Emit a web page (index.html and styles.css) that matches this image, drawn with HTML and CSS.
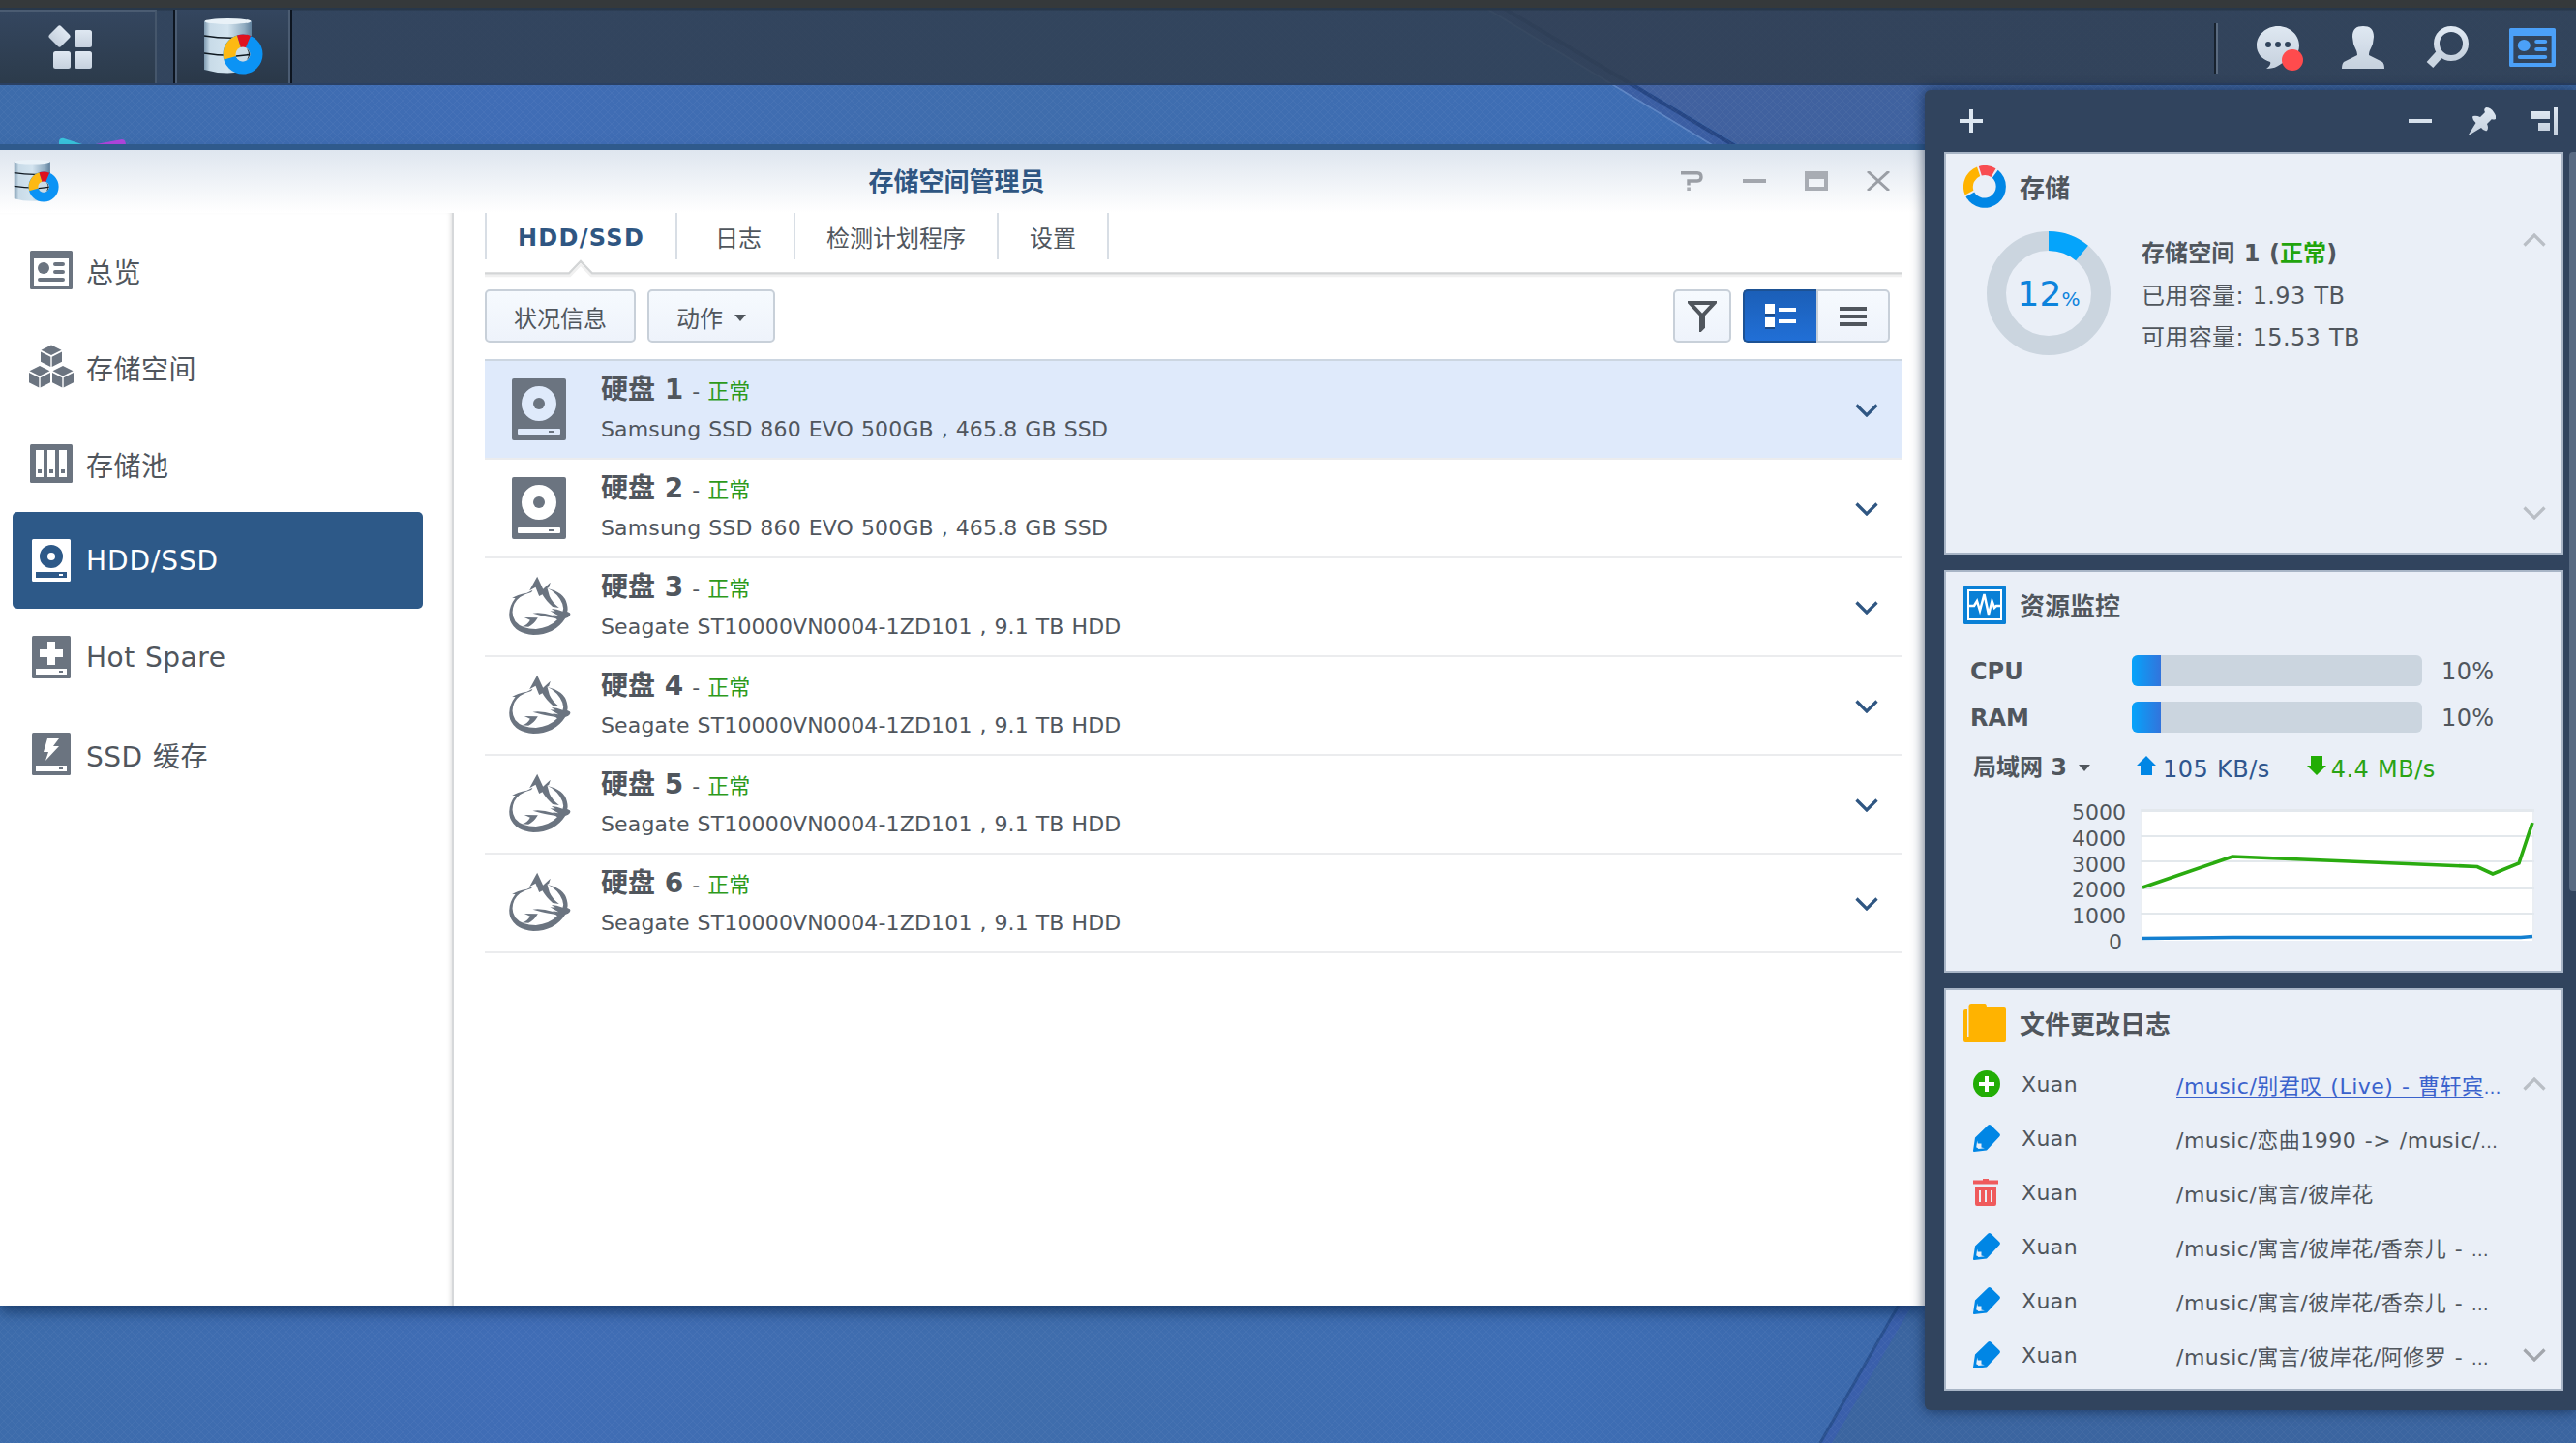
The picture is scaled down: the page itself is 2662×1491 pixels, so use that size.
FILE: index.html
```html
<!DOCTYPE html>
<html lang="zh-CN">
<head>
<meta charset="utf-8">
<title>存储空间管理员</title>
<link rel="stylesheet" href="styles.css">
</head>
<body>
<svg width="0" height="0" class="defs" aria-hidden="true">
  <defs>
    <linearGradient id="g-light" x1="0" y1="0" x2="0" y2="1"><stop offset="0" stop-color="#dfe8f2"/><stop offset="1" stop-color="#c6d1de"/></linearGradient>
    <linearGradient id="g-metal" x1="0" y1="0" x2="1" y2="0"><stop offset="0" stop-color="#7e9ab0"/><stop offset=".12" stop-color="#c8dbe8"/><stop offset=".5" stop-color="#d3e4ef"/><stop offset=".85" stop-color="#8fabc0"/><stop offset="1" stop-color="#5f7f9b"/></linearGradient>
    <symbol id="i-storage" viewBox="0 0 62 58">
      <path d="M1 3Q25-1 50 3V53Q25 60 1 53Z" fill="url(#g-metal)"/>
      <ellipse cx="25.500" cy="3" rx="24" ry="3" fill="#e9f2f8"/>
      <path d="M1 18Q25 22 50 19M1 36Q25 40 50 37" stroke="#0f1820" stroke-width="1.600" fill="none"/>
      <circle cx="41" cy="37" r="14" fill="none" stroke="#0b93f5" stroke-width="13"/>
      <path d="M41 37L21.400 42.600A20.500 20.500 0 0 1 35 17.400Z" fill="#fdb913"/>
      <path d="M41 37L35 17.400A20.500 20.500 0 0 1 49 18Z" fill="#e0121f"/>
      <circle cx="41" cy="37" r="7.500" fill="#c9dbe8"/>
      <path d="M34 39L48 37.500" stroke="#0f1820" stroke-width="1.600"/>
      <path d="M45 31A7.500 7.500 0 0 1 45 43Q49 37 45 31Z" fill="#101820"/>
    </symbol>
    <symbol id="i-overview" viewBox="0 0 44 40">
      <path fill-rule="evenodd" d="M1.500 0H42.500Q44 0 44 1.500V38.500Q44 40 42.500 40H1.500Q0 40 0 38.500V1.500Q0 0 1.500 0ZM4 8V36H40V8Z"/>
      <circle cx="14" cy="18" r="6"/><path d="M26 14H34M26 22H34M10 30H34" stroke="currentColor" stroke-width="4" stroke-linecap="round"/>
    </symbol>
    <symbol id="i-cube" viewBox="0 0 22 22"><path d="M11 0L21.500 5.200L11 10.600L.500 5.200ZM0 7L10.300 12.300V22.500L0 17.200ZM22 7L11.700 12.300V22.500L22 17.200Z"/></symbol>
    <symbol id="i-disk" viewBox="0 0 40 44">
      <path fill-rule="evenodd" d="M1.500 0H38.500Q40 0 40 1.500V42.500Q40 44 38.500 44H1.500Q0 44 0 42.500V1.500Q0 0 1.500 0ZM20 6A12 12 0 1 0 20 30A12 12 0 1 0 20 6ZM4 34V40H36V34Z"/>
      <circle cx="20" cy="18" r="4"/><path d="M28 36H32V38H28Z"/>
    </symbol>
    <symbol id="i-drive" viewBox="0 0 56 64">
      <path fill-rule="evenodd" d="M2 0H54Q56 0 56 2V62Q56 64 54 64H2Q0 64 0 62V2Q0 0 2 0ZM28 8A18 18 0 1 0 28 44A18 18 0 1 0 28 8ZM7 52Q6 52 6 53V57Q6 58 7 58H49Q50 58 50 57V53Q50 52 49 52Z"/>
      <circle cx="28" cy="26" r="6"/><path d="M38 54H44V56H38Z"/>
    </symbol>
    <symbol id="i-wolf" viewBox="28 19 194 186">
      <path d="M40 88Q55 78 86 72L104 63L100 70Q60 80 47 106Q34 135 50 160Q70 184 114 184Q156 180 180 155L166 140L184 143L158 128L174 129L162 121Q178 122 197 129L199 120Q196 90 163 65L150 58Q202 70 210 106Q214 122 211 130L219 134Q224 141 214 147L205 151Q172 202 106 202Q50 198 34 158Q24 122 50 88Z"/>
      <path d="M94 65L118 21L136 60L159 39L154 55L149 57L156 82Q166 104 186 118L166 115Q144 96 134 77L124 82L113 54Z"/>
      <path d="M104 135Q132 131 167 142L184 153Q150 147 132 143Z"/>
      <path d="M78 148L120 149Q106 172 91 177L70 176Q88 171 96 156Z"/>
    </symbol>
    <symbol id="i-pencil" viewBox="0 0 28 28"><path fill-rule="evenodd" d="M15.500 .500Q17 -.500 18.500 .800L27.200 9.300Q28.600 10.800 27.300 12.300L14 26.500L1 28Q-.300 28 0 26.800L2 13.500ZM4.200 16.500L3.200 23.500Q4.500 23.200 5.500 25L12 24.200L8.500 23.500V19.500H4.800Z"/></symbol>
    <symbol id="i-down" viewBox="0 0 24 14"><path d="M1.500 1.500L12 12L22.500 1.500" fill="none" stroke="currentColor" stroke-width="3.200"/></symbol>
    <symbol id="i-ring" viewBox="0 0 44 44">
      <path d="M35.700 4.700A22 22 0 1 1 2.500 32.200L11.200 27.500A12 12 0 1 0 29.800 12.800Z" fill="#0086e5"/>
      <path d="M1.600 30.500A22 22 0 0 1 14 1.500L17.200 11A12 12 0 0 0 10.400 25.800Z" fill="#ffb300"/>
      <path d="M15.800 .900A22 22 0 0 1 33.500 3.200L28.500 11.900A12 12 0 0 0 18.800 10.500Z" fill="#f84d52"/>
    </symbol>
  </defs>
</svg>
<div class="desktop">
  <svg class="wallpaper" viewBox="0 0 2662 1491">
    <defs>
      <linearGradient id="w1" x1="0" y1="0" x2="1" y2="0"><stop offset="0" stop-color="#3d6cab"/><stop offset=".2" stop-color="#406db6"/><stop offset=".4" stop-color="#3f6dac"/><stop offset=".6" stop-color="#3e6eb5"/><stop offset=".75" stop-color="#3b68aa"/><stop offset="1" stop-color="#3e64a5"/></linearGradient>
      <linearGradient id="w2" x1="0" y1="0" x2="1" y2="0"><stop offset="0" stop-color="#42609f"/><stop offset="1" stop-color="#3c66a0"/></linearGradient>
      <pattern id="weave" width="8" height="8" patternUnits="userSpaceOnUse"><path d="M0 0L8 8M8 0L0 8" stroke="#fff" stroke-opacity=".035" stroke-width="1"/></pattern>
    </defs>
    <rect width="2662" height="1491" fill="url(#w1)"/>
    <path d="M1555 8L1805 155H2662V8Z" fill="url(#w2)"/>
    <path d="M1535 8L1778 155H1802L1555 8Z" fill="#3b5ea3"/>
    <path d="M1535 8L1778 155" stroke="#5d85c4" stroke-width="1.500"/><path d="M1553 8L1800 155" stroke="#264684" stroke-width="4"/>
    <path d="M1964 1345L1881 1491H2662V1345Z" fill="#3b65a0"/>
    <path d="M1964 1345L1881 1491H1893L1978 1345Z" fill="#3a5fab"/><path d="M1964 1345L1881 1491" stroke="#29508f" stroke-width="3"/>
    <rect width="2662" height="1491" fill="url(#weave)"/>
    <path d="M61 146Q62 142 66 143L88 150H61Z" fill="#39c3dc"/><path d="M99 149L126 144Q130 144 130 150H96Z" fill="#b045dc"/>
  </svg>

  <header class="taskbar">
    <div class="main-menu"><svg width="46" height="46" viewBox="0 0 46 46" fill="url(#g-light)"><rect x="3" y="3" width="17" height="17" rx="2.500" transform="rotate(45 11.500 11.500)"/><rect x="27" y="5" width="18" height="18" rx="2.500"/><rect x="5" y="27" width="18" height="18" rx="2.500"/><rect x="27" y="27" width="18" height="18" rx="2.500"/></svg></div>
    <div class="task"><svg width="62" height="58"><use href="#i-storage"/></svg></div>
    <div class="tray">
      <svg class="chat" width="50" height="48" viewBox="0 0 50 48"><path d="M22 0C34 0 44 9 44 20C44 30 37 36 27 38C23 40 20 44 10 44C13 42 15 39 14 37C5 34 0 28 0 20C0 9 10 0 22 0Z" fill="url(#g-light)"/><g fill="#31445c"><circle cx="12" cy="19" r="3"/><circle cx="22" cy="19" r="3"/><circle cx="32" cy="19" r="3"/></g><circle cx="37" cy="35" r="11" fill="#ff4b4d"/></svg>
      <svg class="user" width="44" height="44" viewBox="0 0 44 44" fill="url(#g-light)"><path d="M22 0C29 0 33 3 33 11L32 18C31 22 28 25 28 30Q36 34 42 37Q44 39 44 44H0Q0 39 2 37Q8 34 16 30C16 25 13 22 12 18L11 11C11 3 15 0 22 0Z"/></svg>
      <svg class="find" width="44" height="44" viewBox="0 0 44 44"><circle cx="26" cy="18" r="15" fill="none" stroke="url(#g-light)" stroke-width="6"/><path d="M14 29L4 40" stroke="#cbd6e2" stroke-width="9"/></svg>
      <svg class="widget-btn" width="48" height="40" viewBox="0 0 44 40" preserveAspectRatio="none"><use href="#i-overview"/></svg>
    </div>
  </header>

  <section class="window">
    <header class="titlebar">
      <svg width="47" height="44"><use href="#i-storage"/></svg>
      <h1>存储空间管理员</h1>
      <div class="controls">
        <svg width="24" height="20" viewBox="0 0 24 20"><path d="M0 1.700H17Q21 1.700 21 6Q21 10 17 10H8V14.500" fill="none" stroke="#9a9ea5" stroke-width="3.400"/><rect x="6.300" y="16.500" width="3.600" height="3.500" fill="#a8acb2"/></svg>
        <svg width="24" height="20" viewBox="0 0 24 20"><path d="M0 10H24" stroke="#a2a6ad" stroke-width="4"/></svg>
        <svg width="24" height="20" viewBox="0 0 24 20"><path fill-rule="evenodd" d="M0 0H24V20H0ZM4 8V16H20V8Z" fill="#a8acb3"/></svg>
        <svg width="24" height="20" viewBox="0 0 24 20"><path d="M1 0L23 20M23 0L1 20" stroke="#9a9ea5" stroke-width="3"/></svg>
      </div>
    </header>
    <div class="body">
      <nav class="side">
        <a><svg width="44" height="40"><use href="#i-overview"/></svg><span>总览</span></a>
        <a><svg width="46" height="46" viewBox="0 0 46 46"><use href="#i-cube" x="12" y="0" width="22" height="23"/><use href="#i-cube" x="0" y="21" width="22" height="24"/><use href="#i-cube" x="24" y="21" width="22" height="24"/></svg><span>存储空间</span></a>
        <a><svg width="44" height="40" viewBox="0 0 44 40"><rect width="44" height="40" rx="1.500"/><path fill="#fff" fill-rule="evenodd" d="M6 6H14V34H6ZM18 6H26V34H18ZM30 6H38V34H30ZM8 26H12V30H8ZM20 26H24V30H20ZM32 26H36V30H32Z"/></svg><span>存储池</span></a>
        <a class="on"><svg width="40" height="44"><use href="#i-disk"/></svg><span>HDD/SSD</span></a>
        <a><svg width="40" height="44" viewBox="0 0 40 44"><rect width="40" height="44" rx="1.500"/><path fill="#fff" fill-rule="evenodd" d="M16 6H24V14H32V22H24V30H16V22H8V14H16ZM4 34H36V40H4ZM28 36V38H32V36Z"/></svg><span>Hot Spare</span></a>
        <a><svg width="40" height="44" viewBox="0 0 40 44"><rect width="40" height="44" rx="1.500"/><path fill="#fff" fill-rule="evenodd" d="M16 6H28L22 14H28L14 29L17 20H12ZM4 34H36V40H4ZM28 36V38H32V36Z"/></svg><span>SSD 缓存</span></a>
      </nav>
      <main class="content">
        <div class="tabs">
          <a class="t1 on"><b>HDD/SSD</b></a><a class="t2">日志</a><a class="t3">检测计划程序</a><a class="t4">设置</a>
        </div>
        <svg width="1464" height="20" viewBox="0 0 1464 20"><path d="M0 14.500H87L99 2L111 14.500H1464" fill="none" stroke="#d3d5d6" stroke-width="2.500"/><path d="M0 17H88L99 5.500L110 17H1464" fill="none" stroke="#f0f0f0" stroke-width="2.500"/></svg>
        <div class="tools">
          <button class="btn health">状况信息</button>
          <button class="btn act">动作<i class="caret"></i></button>
          <button class="btn filter"><svg width="30" height="32" viewBox="0 0 30 32"><path d="M2.500 2H27.500L16 14.500V27L14 29V14.500Z" fill="none" stroke="#50565d" stroke-width="4"/></svg></button>
          <div class="toggle">
            <span class="sel"><svg width="32" height="26" viewBox="0 0 32 26"><path fill="#1c4a85" d="M0 2H10V12H0ZM0 16H10V26H0Z"/><path fill="#fff" d="M0 0H10V10H0ZM14 4H32V8H14ZM0 14H10V24H0ZM14 16H32V20H14Z"/></svg></span>
            <span class="plain"><svg width="28" height="20" viewBox="0 0 28 20"><path fill="#50565d" d="M0 0H28V4H0ZM0 8H28V12H0ZM0 16H28V20H0Z"/></svg></span>
          </div>
        </div>
        <ul class="disks">
          <li class="cur"><div class="pic"><svg width="56" height="64"><use href="#i-drive"/></svg></div><div class="info"><p><b>硬盘 1</b><em>-</em><span class="ok">正常</span></p><p class="model">Samsung SSD 860 EVO 500GB , 465.8 GB SSD</p></div><svg class="chev" width="24" height="14"><use href="#i-down"/></svg></li>
          <li><div class="pic"><svg width="56" height="64"><use href="#i-drive"/></svg></div><div class="info"><p><b>硬盘 2</b><em>-</em><span class="ok">正常</span></p><p class="model">Samsung SSD 860 EVO 500GB , 465.8 GB SSD</p></div><svg class="chev" width="24" height="14"><use href="#i-down"/></svg></li>
          <li><div class="pic"><svg width="65" height="62"><use href="#i-wolf"/></svg></div><div class="info"><p><b>硬盘 3</b><em>-</em><span class="ok">正常</span></p><p class="model">Seagate ST10000VN0004-1ZD101 , 9.1 TB HDD</p></div><svg class="chev" width="24" height="14"><use href="#i-down"/></svg></li>
          <li><div class="pic"><svg width="65" height="62"><use href="#i-wolf"/></svg></div><div class="info"><p><b>硬盘 4</b><em>-</em><span class="ok">正常</span></p><p class="model">Seagate ST10000VN0004-1ZD101 , 9.1 TB HDD</p></div><svg class="chev" width="24" height="14"><use href="#i-down"/></svg></li>
          <li><div class="pic"><svg width="65" height="62"><use href="#i-wolf"/></svg></div><div class="info"><p><b>硬盘 5</b><em>-</em><span class="ok">正常</span></p><p class="model">Seagate ST10000VN0004-1ZD101 , 9.1 TB HDD</p></div><svg class="chev" width="24" height="14"><use href="#i-down"/></svg></li>
          <li><div class="pic"><svg width="65" height="62"><use href="#i-wolf"/></svg></div><div class="info"><p><b>硬盘 6</b><em>-</em><span class="ok">正常</span></p><p class="model">Seagate ST10000VN0004-1ZD101 , 9.1 TB HDD</p></div><svg class="chev" width="24" height="14"><use href="#i-down"/></svg></li>
        </ul>
      </main>
    </div>
  </section>

  <aside class="widgets">
    <header class="wbar">
      <svg width="24" height="24" viewBox="0 0 24 24"><path d="M10 0H14V10H24V14H14V24H10V14H0V10H10Z" fill="#dde7f1"/></svg>
      <svg class="wmin" width="24" height="24" viewBox="0 0 24 24"><path d="M0 10H24V14H0Z" fill="#d7e1ec"/></svg>
      <svg class="wpin" width="28" height="28" viewBox="0 0 28 28" fill="url(#g-light)"><path d="M18 0Q23 0 26 5Q29 9 28 12Q25 13 24 12L19 17Q21 21 19 24Q16 25 13 21L1.500 28H0L7.500 16Q3 12 4.500 9Q8 8 12 10L17 5Q15 2 18 0Z"/></svg>
      <svg class="wdock" width="28" height="28" viewBox="0 0 28 28" fill="url(#g-light)"><path d="M0 4H20V12H0ZM8 16H20V24H8Z"/><path d="M24 0H28V28H24Z"/></svg>
    </header>
    <div class="wlist">
      <section class="card">
        <h2><svg width="44" height="44"><use href="#i-ring"/></svg><span>存储</span></h2>
        <div class="cap">
          <div class="gauge"><svg width="128" height="128" viewBox="0 0 128 128"><circle cx="64" cy="64" r="54" fill="none" stroke="#cbd5df" stroke-width="20"/><path d="M64 10A54 54 0 0 1 98.500 22.500" fill="none" stroke="#05a4fb" stroke-width="20"/></svg><div class="pct"><span>12</span><small>%</small></div></div>
          <div class="facts"><p><b>存储空间 1 (<i>正常</i>)</b></p><p>已用容量: 1.93 TB</p><p>可用容量: 15.53 TB</p></div>
          <div class="arrows"><svg class="up" width="24" height="14"><use href="#i-down"/></svg><svg width="24" height="14"><use href="#i-down"/></svg></div>
        </div>
      </section>
      <section class="card">
        <h2><svg width="44" height="40" viewBox="0 0 44 40"><rect width="44" height="40" rx="1.500" fill="#0a80d6"/><rect x="5" y="5" width="34" height="30" fill="none" stroke="#fff" stroke-width="2"/><path d="M6 21H11L14 16L17 26L21.500 9L26 30L29.500 16L32 23L34 21H38" fill="none" stroke="#fff" stroke-width="2.500"/></svg><span>资源监控</span></h2>
        <div class="meter"><b>CPU</b><div class="bar"><div style="width:10%"></div></div><span>10%</span></div>
        <div class="meter"><b>RAM</b><div class="bar"><div style="width:10%"></div></div><span>10%</span></div>
        <div class="net"><b>局域网 3</b><i class="caret"></i><span class="upl"><svg width="20" height="20" viewBox="0 0 20 20"><path d="M10 0L20 10H16V20H4V10H0Z" fill="#0086e5"/></svg><span>105 KB/s</span></span><span class="dnl"><svg width="20" height="20" viewBox="0 0 20 20"><path d="M10 20L0 10H4V0H16V10H20Z" fill="#22ad05"/></svg><span>4.4 MB/s</span></span></div>
        <div class="chart">
          <div class="axis"><span>5000</span><span>4000</span><span>3000</span><span>2000</span><span>1000</span><span class="zero">0</span></div>
          <svg width="407" height="138" viewBox="0 0 407 138"><rect width="407" height="136" fill="#fff"/><path d="M0 1.500H407" stroke="#e3e8ed" stroke-width="3"/><path d="M0 28H407M0 54H407M0 82H407M0 108H407" stroke="#e3e8ec" stroke-width="2"/><path d="M1 0V136M406 0V136" stroke="#e3e9f0" stroke-width="1.500"/><path d="M2 81L95 49L348 59.500L364 67L391 56L405 14" fill="none" stroke="#2aab10" stroke-width="3.600"/><path d="M2 133.500L95 132.500H393L405 131.500" fill="none" stroke="#137fd0" stroke-width="3.400"/></svg>
        </div>
      </section>
      <section class="card">
        <h2><svg width="44" height="40" viewBox="0 0 44 40" fill="#ffb300"><path d="M8 0H22Q24 0 24 4H42Q44 4 44 6V38Q44 40 42 40H2Q0 40 0 38V8Q0 6 2 6H4V34H5.500V2Q6 0 8 0Z"/></svg><span>文件更改日志</span></h2>
        <div class="log">
          <ul>
            <li><svg width="28" height="28" viewBox="0 0 28 28"><circle cx="14" cy="14" r="14" fill="#22ad05"/><path d="M6 14H22M14 6V22" stroke="#fff" stroke-width="4"/></svg><span class="who">Xuan</span><span class="path link"><u>/music/别君叹 (Live) - 曹轩宾</u><small>…</small></span></li>
            <li><svg width="28" height="28"><use href="#i-pencil"/></svg><span class="who">Xuan</span><span class="path">/music/恋曲1990 -&gt; /music/<small>…</small></span></li>
            <li><svg width="28" height="28" viewBox="0 0 28 28" fill="#ef5a5c"><path d="M10 0H16V1.500H26V5.500H0V1.500H10Z"/><path fill-rule="evenodd" d="M2 8H24V26Q24 28 22 28H4Q2 28 2 26ZM6 12V24H8V12ZM12 12V24H14V12ZM18 12V24H20V12Z"/></svg><span class="who">Xuan</span><span class="path">/music/寓言/彼岸花</span></li>
            <li><svg width="28" height="28"><use href="#i-pencil"/></svg><span class="who">Xuan</span><span class="path">/music/寓言/彼岸花/香奈儿 - <small>…</small></span></li>
            <li><svg width="28" height="28"><use href="#i-pencil"/></svg><span class="who">Xuan</span><span class="path">/music/寓言/彼岸花/香奈儿 - <small>…</small></span></li>
            <li><svg width="28" height="28"><use href="#i-pencil"/></svg><span class="who">Xuan</span><span class="path">/music/寓言/彼岸花/阿修罗 - <small>…</small></span></li>
          </ul>
          <div class="arrows"><svg class="up" width="24" height="14"><use href="#i-down"/></svg><svg class="live" width="24" height="14"><use href="#i-down"/></svg></div>
        </div>
      </section>
    </div>
    <div class="scroll"></div>
  </aside>
</div>
</body>
</html>
```
FILE: styles.css
```css
* { box-sizing: border-box; }
body { margin: 0; font-family: "DejaVu Sans", "Noto Sans CJK SC", sans-serif; color: #50565d; font-size: 24px; }
h1, h2, p, ul { margin: 0; padding: 0; }
ul { list-style: none; }
i, em { font-style: normal; }
svg { display: block; flex: none; }
.defs { position: absolute; }
.desktop { position: relative; width: 2662px; height: 1491px; overflow: hidden; background: #3d6cab; white-space: nowrap; }
.wallpaper { position: absolute; inset: 0; width: 2662px; height: 1491px; }

/* taskbar */
.taskbar { position: relative; display: flex; height: 88px; padding-top: 10px; background: linear-gradient(#35393b 8px, #27374a 8px, #27374a 10px, rgba(48,62,80,.86) 11px, rgba(48,62,80,.86) 86px, #2a4063 86px); }
.main-menu { width: 162px; height: 76px; padding: 14px 0 0 50px; border-top: 2px solid #4b5c72; border-right: 2px solid #45566b; background: linear-gradient(#34465f, #2c3b4b); }
.task { width: 123px; height: 76px; margin-left: 17px; padding: 9px 0 0 29px; border: solid #0d1520; border-width: 0 2px; box-shadow: inset 2px 0 #4b5c72, inset -2px 0 #4b5c72; background: linear-gradient(#34465f, #2a3848); }
.tray { display: flex; align-items: flex-start; margin-left: auto; padding-right: 21px; height: 76px; }
.tray::before { content: ""; width: 4px; height: 52px; margin: 14px 40px 0 0; background: linear-gradient(90deg, #18222e 50%, #5a6a7f 50%); }
.chat { margin-top: 17px; }
.user { margin: 17px 0 0 38px; }
.find { margin: 17px 0 0 43px; }
.widget-btn { margin: 19px 0 0 42px; color: #4ba0f8; fill: #4ba0f8; }

/* storage manager window */
.window { position: absolute; left: 0; top: 155px; width: 1989px; height: 1194px; background: #fff; box-shadow: 0 -6px 0 #2f5a8c, 0 6px 14px rgba(10,40,80,.7); display: flex; flex-direction: column; }
.titlebar { display: flex; height: 65px; padding: 10px 36px 0 14px; background: linear-gradient(#dfe6ef, #fff); }
.titlebar h1 { flex: 1; padding: 1px 0 0 179px; line-height: 44px; font-size: 26px; text-align: center; color: #2f5682; }
.controls { display: flex; gap: 40px; padding-top: 12px; }
.body { display: flex; flex: 1; }
.side { width: 469px; padding: 9px 30px 0 13px; border-right: 2px solid #d6d8da; box-shadow: inset -4px 0 5px -3px #ddd; display: flex; flex-direction: column; }
.side a { display: grid; grid-template-columns: 80px 1fr; align-items: center; height: 100px; font-size: 28px; fill: #6b7480; letter-spacing: .5px; word-spacing: 1px; }
.side a svg { justify-self: center; color: #6b7480; }
.side a span { margin: 1px 0 0 -4px; }
.side .on { background: #2d5988; border-radius: 5px; fill: #fff; }
.side .on span { color: #fff; letter-spacing: .9px; }

.content { width: 1464px; margin-left: 32px; display: flex; flex-direction: column; }
.tabs { display: flex; height: 48px; border-left: 2px solid #d8dee5; align-self: flex-start; }
.tabs a { display: flex; align-items: center; justify-content: center; border-right: 2px solid #d8dee5; }
.tabs .on { color: #2f5682; letter-spacing: 1.300px; padding-top: 3px; }
.t1 { width: 197px; }
.t2 { width: 122px; padding-left: 6px; }
.t3 { width: 210px; }
.t4 { width: 114px; }
.tools { display: flex; height: 55px; margin-top: 11px; padding-right: 12px; }
.btn, .toggle span { display: flex; align-items: center; justify-content: center; border: 2px solid #c8d0d9; border-radius: 5px; background: linear-gradient(#f6fafe, #eef3fb); color: #50565d; font: inherit; padding: 0; }
.btn { padding-top: 1px; }
.health { width: 156px; }
.act { width: 132px; margin-left: 12px; gap: 12px; }
.act .caret { margin-top: 3px; }
.caret { width: 0; height: 0; border: solid transparent; border-width: 7px 6.500px 0; border-top-color: #50565d; }
.filter { width: 60px; margin-left: auto; }
.toggle { display: flex; margin-left: 12px; }
.toggle .sel { width: 76px; border: 2px solid #1d5294; border-right: 0; border-radius: 5px 0 0 5px; background: linear-gradient(#1b5fb8, #216fd6); }
.toggle .plain { width: 76px; border-radius: 0 5px 5px 0; }
.disks { margin-top: 17px; border-top: 2px solid #ccd6e1; }
.disks li { display: flex; height: 102px; border-bottom: 2px solid #ebecee; padding-right: 24px; }
.disks .cur { background: #dfeafb; }
.pic { width: 112px; padding-top: 18px; display: flex; justify-content: center; fill: #6b7480; }
.info { margin-left: 8px; flex: 1; }
.info p { display: flex; align-items: baseline; height: 40px; line-height: 40px; margin-top: 10px; }
.info b { font-size: 28px; }
.info em { margin: 0 8px 0 9px; font-size: 22px; }
.ok { color: #2d9a1b; font-size: 22px; }
.info .model { margin-top: 1px; font-size: 22px; letter-spacing: .16px; word-spacing: .7px; }
.chev { margin-top: 44px; color: #2f5682; }

/* widget panel */
.widgets { position: absolute; left: 1989px; top: 93px; width: 673px; height: 1364px; border-radius: 6px 0 0 6px; background: #31445e; box-shadow: 0 0 14px rgba(10,30,60,.7); display: grid; grid-template: 64px 1fr / 1fr 7px; }
.wbar { grid-column: 1 / 3; display: flex; padding: 20px 19px 0 36px; }
.wmin { margin-left: auto; }
.wpin { margin: -2px 0 0 38px; }
.wdock { margin: -2px 0 0 36px; }
.wlist { display: flex; flex-direction: column; gap: 16px; padding-left: 20px; }
.card { width: 640px; height: 416px; border: 2px solid #a8b5c6; background: #eaeff7; padding: 12px 16px 0 18px; }
.card h2 { display: flex; align-items: center; gap: 14px; height: 44px; font-size: 26px; }
.card h2 span { margin-top: -2px; }
.cap { display: flex; height: 298px; margin-top: 24px; }
.gauge { position: relative; width: 128px; height: 128px; margin-left: 24px; }
.pct { position: absolute; inset: 1px 0 0; display: flex; align-items: baseline; justify-content: center; line-height: 128px; font-size: 36px; color: #0d83dc; }
.pct small { font-size: 20px; }
.facts { flex: 1; margin: 2px 0 0 32px; letter-spacing: .35px; word-spacing: .9px; }
.facts p { height: 43.500px; line-height: 43.500px; }
.facts b { letter-spacing: .1px; }
.facts i { color: #22a40c; }
.arrows { display: flex; flex-direction: column; justify-content: space-between; padding-top: 2px; color: #b9bec5; }
.up { transform: scaleY(-1); }
.arrows .live { color: #a2a6ac; }
.meter { display: flex; align-items: center; height: 32px; margin: 0 0 16px 7px; }
.card h2 + .meter { margin-top: 30px; }
.meter b, .meter span { padding-top: 2px; }
.meter b { width: 167px; }
.meter span { letter-spacing: .4px; }
.bar { width: 300px; height: 32px; border-radius: 6px; overflow: hidden; background: #cbd5df; margin-right: 20px; }
.bar div { height: 32px; background: linear-gradient(90deg, #05a4fb, #3274dc); }
.net { display: flex; align-items: center; height: 40px; margin-left: 10px; }
.net b { margin-top: -6px; }
.net .caret { margin-left: 12px; }
.upl, .dnl { display: flex; align-items: center; gap: 7px; color: #2f568e; margin-left: 48px; letter-spacing: .45px; word-spacing: .8px; }
.upl svg, .dnl svg { margin-top: -4px; }
.upl span, .dnl span { margin-top: 3px; }
.dnl { color: #2aa313; margin-left: 38px; gap: 5px; }
.chart { display: flex; justify-content: flex-end; margin: 23px 12px 0 0; }
.axis { display: flex; flex-direction: column; width: 60px; margin: -9px 15px 0 0; text-align: right; font-size: 22px; line-height: 26.800px; }
.zero { padding-right: 4px; }
.log { display: flex; height: 336px; margin-top: 13px; }
.log ul { flex: 1; }
.log li { display: flex; align-items: center; height: 56px; padding-left: 10px; font-size: 22px; fill: #0086e5; }
.who { width: 160px; margin-left: 22px; letter-spacing: .4px; }
.path { letter-spacing: .5px; word-spacing: 1px; margin-top: -1px; }
.path small { font-size: 18px; letter-spacing: 0; }
.link { color: #3a62cc; }
.link u { text-underline-offset: 3px; }
.log .arrows { padding: 21px 0 21px; }
.scroll { width: 7px; height: 764px; background: #586a82; border-radius: 4px 0 0 4px; }
```
